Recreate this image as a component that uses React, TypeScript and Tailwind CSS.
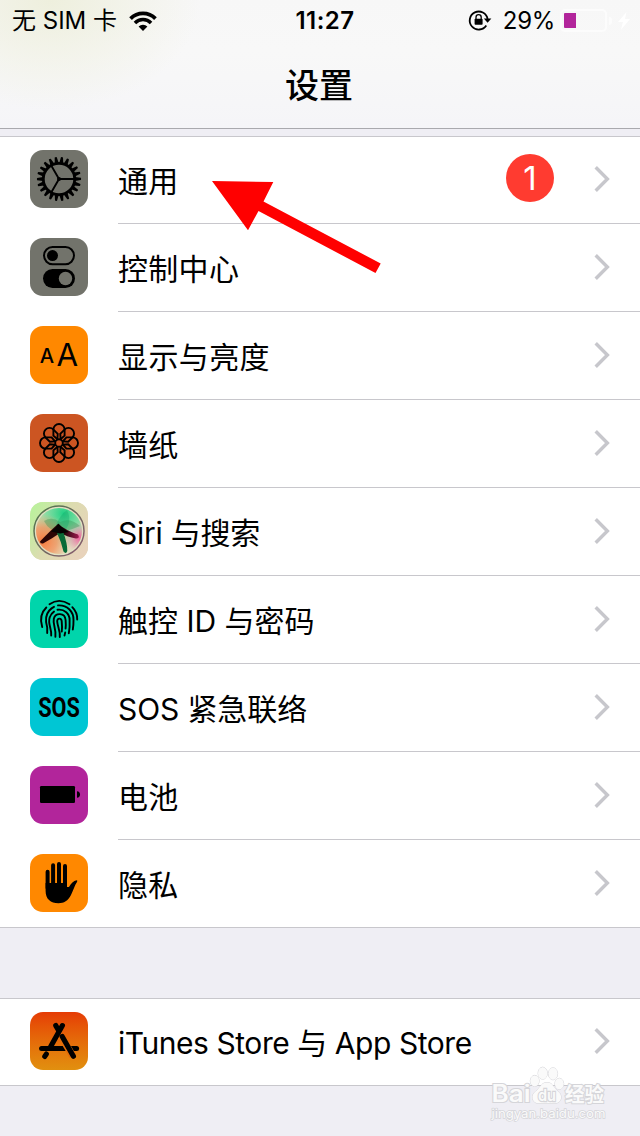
import type { ReactNode } from "react"

const GEAR_TEETH = Array.from({ length: 22 }, (_, i) => (i * 360) / 22)
const PETALS = Array.from({ length: 8 }, (_, i) => i * 45)

function GearIcon() {
  return (
    <svg viewBox="0 0 58 58" className="size-full">
      <g transform="translate(29 29)">
        {GEAR_TEETH.map((angle) => (
          <path key={angle} d="M16 -2 L21.9 -1.2 Q22.4 0 21.9 0.9 L16 2 Z" transform={`rotate(${angle})`} />
        ))}
        <circle r="15.7" fill="none" stroke="#000" strokeWidth="2.8" />
        <path d="M0 0 H15 M0 0 L-7.5 -13 M0 0 L-7.5 13" stroke="#000" strokeWidth="1.9" />
        <circle r="2" />
      </g>
    </svg>
  )
}

function TogglesIcon() {
  return (
    <svg viewBox="0 0 58 58" className="size-full">
      <rect x="14" y="9" width="30" height="17.2" rx="8.6" fill="none" stroke="#000" strokeWidth="2" />
      <circle cx="22.5" cy="17.6" r="5.5" />
      <rect x="13" y="31" width="32" height="19" rx="9.5" />
      <circle cx="35.5" cy="40.5" r="6.7" fill="#72736b" />
    </svg>
  )
}

function DisplayIcon() {
  return (
    <svg viewBox="0 0 58 58" className="size-full font-[Inter,sans-serif]">
      <text x="9.8" y="37" fontSize="20" fontWeight="500" textLength="14.4" lengthAdjust="spacingAndGlyphs">A</text>
      <text x="26.6" y="40" fontSize="31.5" fontWeight="400" textLength="21.6" lengthAdjust="spacingAndGlyphs">A</text>
    </svg>
  )
}

function FlowerIcon() {
  return (
    <svg viewBox="0 0 58 58" className="size-full">
      <g transform="translate(29 29)" fill="none" stroke="#000" strokeWidth="1.9">
        {PETALS.map((angle) => (
          <path
            key={angle}
            d="M-1.5 -3.8 L-5.6 -7.4 V-13.4 A5.6 5.6 0 0 1 5.6 -13.4 V-7.4 L1.5 -3.8"
            transform={`rotate(${angle})`}
          />
        ))}
        <circle r="3.8" />
      </g>
    </svg>
  )
}

function SiriIcon() {
  return (
    <svg viewBox="0 0 58 58" className="size-full">
      <defs>
        <linearGradient id="siriBack" x1="0" y1="0.1" x2="1" y2="0.7">
          <stop offset="0" stopColor="#b9f29c" />
          <stop offset="0.5" stopColor="#dcdcb0" />
          <stop offset="1" stopColor="#e8d3bb" />
        </linearGradient>
        <linearGradient id="siriRing" x1="0" y1="0" x2="1" y2="1">
          <stop offset="0" stopColor="#4f7a4c" />
          <stop offset="1" stopColor="#8c5a72" />
        </linearGradient>
        <radialGradient id="siriGreen" cx="0.6" cy="0.12" r="0.75">
          <stop offset="0" stopColor="#1fd083" />
          <stop offset="0.5" stopColor="#6fdc9c" stopOpacity="0.8" />
          <stop offset="1" stopColor="#9fe0a8" stopOpacity="0" />
        </radialGradient>
        <radialGradient id="siriOrange" cx="0.15" cy="0.72" r="0.6">
          <stop offset="0" stopColor="#f77b3d" />
          <stop offset="0.5" stopColor="#f4905a" stopOpacity="0.75" />
          <stop offset="1" stopColor="#f0a870" stopOpacity="0" />
        </radialGradient>
        <radialGradient id="siriPink" cx="0.95" cy="0.65" r="0.35">
          <stop offset="0" stopColor="#ee5f9c" />
          <stop offset="1" stopColor="#eaa0b8" stopOpacity="0" />
        </radialGradient>
        <linearGradient id="siriArm" x1="0" y1="0" x2="1" y2="0">
          <stop offset="0.3" stopColor="#250308" />
          <stop offset="1" stopColor="#a01c52" />
        </linearGradient>
      </defs>
      <rect width="58" height="58" fill="url(#siriBack)" />
      <circle cx="29" cy="29" r="25" fill="#e2e0c2" stroke="url(#siriRing)" strokeWidth="1.5" />
      <circle cx="29" cy="29" r="23" fill="url(#siriGreen)" />
      <circle cx="29" cy="29" r="23" fill="url(#siriOrange)" />
      <circle cx="29" cy="29" r="23" fill="url(#siriPink)" />
      <path d="M14 19 Q22 14 30 20 Q40 15 50 24 Q43 27 33 30 Q20 31 14 19 Z" fill="#3a9455" opacity="0.4" />
      <path d="M26 23 Q30 13 37 8 Q43 20 33 31 Z" fill="#1aa96b" opacity="0.4" />
      <path d="M28 22 Q21 28 10 39.5 Q10 42 13 41.5 Q23 36 30 31 Z" fill="#2b0505" />
      <path d="M28 22 Q37 29 48 32.5 Q50.5 36.5 46 36.5 Q37 35 29 30 Z" fill="url(#siriArm)" />
      <path d="M28 24 L33 29 Q37.5 42 37.3 49 Q36 52.5 33.5 49.5 Q31 39 27 31 Z" fill="#0a6a37" />
      <path d="M21 29.5 Q26 26 28.5 21.5 L31.5 25 Q35 28 39 30 L30 31.5 Z" fill="#050302" />
    </svg>
  )
}

function FingerprintIcon() {
  return (
    <svg viewBox="0 0 58 58" className="size-full" fill="none" stroke="#000" strokeWidth="1.9" strokeLinecap="round">
      <path d="M19.5 14.3 Q29 7.5 39.5 14.3" />
      <path d="M16.3 17.5 Q8.5 25 12.2 37" />
      <path d="M42.3 17.2 Q47.5 22.5 47.2 29.5" />
      <path d="M17.2 43 V37.5 C15.2 31 14.8 25.5 19.3 20.5 Q21.5 18 24 16.8" />
      <path d="M28 15.4 C37 14.7 43.7 21.5 43.5 30 Q43.6 35 42.8 39.5" />
      <path d="M21.2 45.5 C21.8 38 17.5 34 19.7 27.5 Q21 23.5 24 21.6" />
      <path d="M27.5 19.8 C34.5 18.8 39.7 24 39.6 30 Q40 38 38.8 43.3" />
      <path d="M25.4 46.8 C26.5 39 22.5 34.5 23.8 28.8 C25.2 22.5 35 22.2 35.6 30 Q36 35 35.6 38.5" />
      <path d="M35.2 42.5 L34.5 45.5" />
      <path d="M29.8 47 C30.3 40 27.7 37.5 27.2 31.5 C27 27.8 31.5 27.6 31.7 31.3 Q32.3 37 31.8 41.5" />
    </svg>
  )
}

function SosIcon() {
  return (
    <svg viewBox="0 0 58 58" className="size-full font-[Roboto,sans-serif]">
      <text transform="translate(8.2 38.8) scale(1 1.28)" fontSize="21.5" fontWeight="700" textLength="41.6" lengthAdjust="spacingAndGlyphs">
        SOS
      </text>
    </svg>
  )
}

function BatteryIcon() {
  return (
    <svg viewBox="0 0 58 58" className="size-full">
      <rect x="10" y="20" width="35" height="17" rx="1.2" />
      <path d="M47 25.3 Q50 25.6 50 28.5 Q50 31.4 47 31.7 Z" />
    </svg>
  )
}

function HandIcon() {
  return (
    <svg viewBox="0 0 58 58" className="size-full">
      <path d="M17.6 17.8 V34 M23.1 11.2 V32 M29 10 V32 M35 12 V32" stroke="#000" strokeWidth="4" strokeLinecap="round" />
      <path d="M15.6 29 H37 V33 H39 Q42 27.3 46.5 26.3 Q48 26.4 47 28 C44.5 31.5 43.5 36 41 41 C38 47 34 49.2 28.5 49.2 C20.5 49.2 15.6 45 15.6 37 Z" />
    </svg>
  )
}

function AppStoreIcon() {
  return (
    <svg viewBox="0 0 58 58" className="size-full" fill="none" strokeLinecap="round">
      <path d="M25.8 13.6 L28.5 18.2" stroke="#000" strokeWidth="5.2" />
      <path d="M32.4 13.6 L20.7 34.5" stroke="#000" strokeWidth="5.2" />
      <path d="M11.6 36.6 H46.6" stroke="#000" strokeWidth="5" />
      <path d="M31.4 24.5 L42.8 44.2" stroke="#e36d0a" strokeWidth="7.2" strokeLinecap="butt" />
      <path d="M32.2 24.5 L43.4 44.2" stroke="#000" strokeWidth="5.2" />
      <path d="M16.4 42 L14.7 44.5" stroke="#000" strokeWidth="5" />
    </svg>
  )
}

function AppTile({ className, children }: { className: string; children: ReactNode }) {
  return <div className={`size-[58px] shrink-0 overflow-hidden rounded-[13px] ${className}`}>{children}</div>
}

function Chevron() {
  return (
    <svg viewBox="0 0 16 26" className="h-[26px] w-4 shrink-0" fill="none" stroke="#c7c7cc" strokeWidth="3.4">
      <path d="M1.7 1.2 L13.4 13 L1.7 24.8" />
    </svg>
  )
}

interface RowProps {
  label: string
  tile: string
  icon: ReactNode
  tracking: string
  badge?: number
  last?: boolean
}

function Row({ label, tile, icon, tracking, badge, last }: RowProps) {
  return (
    <div className={`flex h-[88px] items-stretch gap-[30px] pl-[30px] ${last ? "border-b border-[#c8c7cc]" : ""}`}>
      <div className="pt-3.5">
        <AppTile className={tile}>{icon}</AppTile>
      </div>
      <div className={`flex flex-1 items-center pr-[30px] ${last ? "" : "border-b border-[#c8c7cc]"}`}>
        <span className={`whitespace-nowrap pt-0.5 text-[30px] leading-[40px] ${tracking}`}>{label}</span>
        <div className="ml-auto flex items-center gap-10 pb-0.5">
          {badge && (
            <span className="-mt-0.5 flex size-12 items-center justify-center rounded-full bg-[#ff3b30] pt-0.5 text-[33px] leading-none text-white">
              {badge}
            </span>
          )}
          <Chevron />
        </div>
      </div>
    </div>
  )
}

const ROWS: RowProps[] = [
  { label: "通用", tile: "bg-[#72736b]", icon: <GearIcon />, badge: 1, tracking: "tracking-[0.3px]" },
  { label: "控制中心", tile: "bg-[#72736b]", icon: <TogglesIcon />, tracking: "tracking-[0.3px]" },
  { label: "显示与亮度", tile: "bg-[#ff8800]", icon: <DisplayIcon />, tracking: "tracking-[0.4px]" },
  { label: "墙纸", tile: "bg-[#cc5522]", icon: <FlowerIcon />, tracking: "tracking-[0.3px]" },
  { label: "Siri 与搜索", tile: "bg-[#dddcb4]", icon: <SiriIcon />, tracking: "tracking-[-0.25px]" },
  { label: "触控 ID 与密码", tile: "bg-[#00d5ab]", icon: <FingerprintIcon />, tracking: "tracking-normal" },
  { label: "SOS 紧急联络", tile: "bg-[#00c6d4]", icon: <SosIcon />, tracking: "tracking-[-0.1px]" },
  { label: "电池", tile: "bg-[#b2259b]", icon: <BatteryIcon />, tracking: "tracking-[0.3px]" },
  { label: "隐私", tile: "bg-[#ff8800]", icon: <HandIcon />, tracking: "tracking-[0.3px]", last: true },
]

function StatusBar() {
  return (
    <div className="grid h-[42px] grid-cols-[1fr_auto_1fr] items-center text-[24px] leading-[42px]">
      <div className="flex items-center gap-3 pl-3">
        <span className="whitespace-nowrap">无 SIM 卡</span>
        <svg viewBox="0 0 28 20" className="mb-px h-5 w-7" fill="none" stroke="#000">
          <path d="M1.55 7.55 A17.6 17.6 0 0 1 26.45 7.55" strokeWidth="3.8" />
          <path d="M5.94 11.94 A11.4 11.4 0 0 1 22.06 11.94" strokeWidth="3.5" />
          <path d="M14 20 L9.6 15.6 A6.2 6.2 0 0 1 18.4 15.6 Z" fill="#000" stroke="none" />
        </svg>
      </div>
      <span className="pl-2.5 font-semibold tracking-[0.5px]">11:27</span>
      <div className="flex items-center justify-end pr-2.5">
        <svg viewBox="0 0 24 22" className="mr-[11px] mb-0.5 h-[22px] w-6">
          <path d="M18.3 16.4 A9 9 0 1 1 19.6 10" fill="none" stroke="#000" strokeWidth="1.8" />
          <path d="M15.8 9.6 H23.4 L19.6 13.8 Z" />
          <rect x="6.6" y="9.8" width="8" height="6" rx="0.8" />
          <path d="M8 10 V8.2 A2.6 2.6 0 0 1 13.2 8.2 V10" fill="none" stroke="#000" strokeWidth="1.3" />
        </svg>
        <span className="mr-[5px] tracking-[-0.3px]">29%</span>
        <div className="mb-px flex h-[23px] w-[47px] rounded-[5px] border-2 border-[#fcfcfc] p-0.5">
          <div className="w-3 rounded-l-[1px] bg-[#b2259b]" />
        </div>
        <div className="ml-0.5 h-2 w-[3px] rounded-r-full bg-[#fcfcfc]" />
        <svg viewBox="0 0 12 18" className="mb-px ml-1.5 h-[18px] w-3 fill-white">
          <path d="M8.5 0 L0 10 H5 L2.8 18 L12 7 H7 Z" />
        </svg>
      </div>
    </div>
  )
}

function Watermark() {
  return (
    <svg viewBox="0 0 120 60" className="absolute top-[1064px] left-[489px] h-[60px] w-[120px] font-[Inter,'Noto_Sans_CJK_SC',sans-serif]">
      <g fill="#fafafa" stroke="#d5d5d9" strokeWidth="1" paintOrder="stroke">
        <text x="2.5" y="38" fontSize="24" fontWeight="600" strokeWidth="2" textLength="39" lengthAdjust="spacingAndGlyphs">Bai</text>
        <ellipse cx="45.7" cy="16.9" rx="4.4" ry="5.5" />
        <ellipse cx="53.7" cy="9.2" rx="4.6" ry="6" />
        <ellipse cx="64" cy="9.8" rx="4.6" ry="6" />
        <ellipse cx="70.3" cy="19.8" rx="4.4" ry="5.5" />
        <path d="M58 18.5 C52 18.5 51 24.5 46.5 27.5 C41.5 31 43 39 49 39.3 H66 C73 39 74 31 69 27.5 C65 24.5 64 18.5 58 18.5 Z" />
        <text x="49" y="37" fontSize="16.5" fontWeight="600" strokeWidth="2.4" textLength="18" lengthAdjust="spacingAndGlyphs">du</text>
        <text x="76" y="37.5" fontSize="20" fontWeight="700" strokeWidth="2" textLength="39" lengthAdjust="spacingAndGlyphs">经验</text>
        <text x="2.5" y="53.5" fontSize="12" fontWeight="400" strokeWidth="1.4" textLength="114" lengthAdjust="spacingAndGlyphs">jingyan.baidu.com</text>
      </g>
    </svg>
  )
}

export default function App() {
  return (
    <div className="relative h-[1136px] w-[640px] overflow-hidden bg-[#efeef4] font-[Inter,'Noto_Sans_CJK_SC',sans-serif] text-black">
      <header className="h-[129px] border-b border-[#a9a9ae] bg-[radial-gradient(ellipse_150px_110px_at_50px_0px,#eeefdd,transparent),linear-gradient(to_bottom,#f7f7f7,#f8f8f8_40%,#f5f5f8)]">
        <StatusBar />
        <h1 className="pt-[19px] pr-0.5 text-center text-[34px] leading-[50px] font-medium">设置</h1>
      </header>

      <section className="mt-[7px] bg-white shadow-[inset_0_1px_0_#c8c7cc]">
        {ROWS.map((row) => (
          <Row key={row.label} {...row} />
        ))}
      </section>

      <section className="mt-[70px] bg-white shadow-[inset_0_1px_0_#c8c7cc]">
        <Row
          label="iTunes Store 与 App Store"
          tile="bg-linear-to-b from-[#e53b05] to-[#e1900f]"
          icon={<AppStoreIcon />}
          tracking="tracking-[-0.45px]"
          last
        />
      </section>

      <svg viewBox="0 0 170 94" className="absolute top-[180px] left-[211px] h-[94px] w-[170px] fill-[#ff0000]">
        <path d="M1 1 L62.3 2 L52.5 21.5 L169.7 83.5 L164.5 93 L47.5 31 L37 50.3 Z" />
      </svg>

      <Watermark />
    </div>
  )
}
